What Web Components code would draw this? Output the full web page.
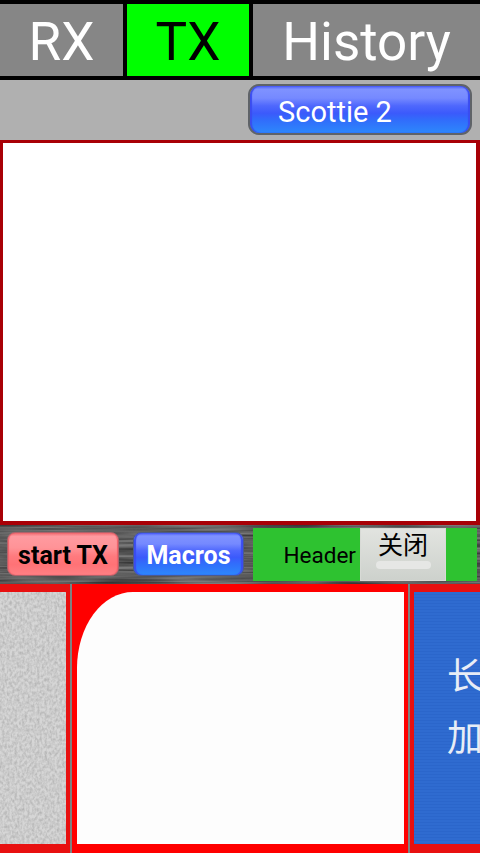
<!DOCTYPE html>
<html lang="zh">
<head>
<meta charset="utf-8">
<title>SSTV</title>
<style>
  html, body { margin: 0; padding: 0; background: #777; }
  body { width: 480px; height: 853px; overflow: hidden; font-family: Roboto, "Noto Sans CJK SC", sans-serif; }
</style>
</head>
<body>
<tab-bar>
  <tab-item>RX</tab-item>
  <tab-item active>TX</tab-item>
  <tab-item>History</tab-item>
</tab-bar>
<mode-bar><gloss-button color="blue" class="mode">Scottie 2</gloss-button></mode-bar>
<image-preview></image-preview>
<tool-bar>
  <gloss-button color="red" bold>start TX</gloss-button>
  <gloss-button color="blue" bold>Macros</gloss-button>
  <header-toggle>Header</header-toggle>
</tool-bar>
<template-strip>
  <strip-card kind="linen"></strip-card>
  <strip-card kind="image"></strip-card>
  <strip-card kind="note">长<br>加</strip-card>
</template-strip>

<script>
const noise = (fx, fy, slope, base) => "url(\"data:image/svg+xml," + encodeURIComponent(
  `<svg xmlns='http://www.w3.org/2000/svg' width='480' height='300'><filter id='n'><feTurbulence type='fractalNoise' baseFrequency='${fx} ${fy}' numOctaves='2' seed='4'/><feColorMatrix values='0 0 0 0 0 0 0 0 0 0 0 0 0 0 0 ${slope} 0 0 0 ${base}'/></filter><rect width='480' height='300' filter='url(#n)'/></svg>`
) + "\")";

class TabBar extends HTMLElement {
  connectedCallback() {
    this.attachShadow({ mode: 'open' }).innerHTML = `
    <style>
      :host {
        display: grid;
        grid-template-columns: 123px 122px 227px;
        grid-column-gap: 4px;
        height: 72px;
        padding: 4px 0;
        background: #000;
      }
    </style>
    <slot></slot>`;
  }
}

class TabItem extends HTMLElement {
  connectedCallback() {
    this.attachShadow({ mode: 'open' }).innerHTML = `
    <style>
      :host {
        display: flex;
        align-items: center;
        justify-content: center;
        box-sizing: border-box;
        padding-top: 5px;
        background: #868686;
        color: #fff;
        font: 53px/67px Roboto, sans-serif;
      }
      :host([active]) { background: #00ff00; color: #000; }
    </style>
    <slot></slot>`;
  }
}

class ModeBar extends HTMLElement {
  connectedCallback() {
    this.attachShadow({ mode: 'open' }).innerHTML = `
    <style>
      :host {
        display: flex;
        justify-content: flex-end;
        box-sizing: border-box;
        height: 60px;
        padding: 4px 8px 5px 0;
        background: #b0b0b0;
      }
      ::slotted(gloss-button) { width: 224px; }
    </style>
    <slot></slot>`;
  }
}

class GlossButton extends HTMLElement {
  connectedCallback() {
    const bold = this.hasAttribute('bold');
    this.attachShadow({ mode: 'open' }).innerHTML = `
    <style>
      :host {
        display: flex;
        box-sizing: border-box;
        border-radius: 11px;
        border: 2px solid #5f6368;
        color: #fff;
        font: 29px Roboto, sans-serif;
        align-items: center;
        justify-content: ${bold ? 'center' : 'flex-start'};
        padding: ${bold ? '3px 0 0' : '5px 0 0 28px'};
        font-weight: ${bold ? 700 : 400};
        background: linear-gradient(#4a5cf8 0, #7f92ff 7%, #7589ff 26%, #4f68fd 42%, #3b5afb 58%, #316cfb 72%, #2d88fb 100%);
        box-shadow: inset 2px 0 1px #3a4cf0, inset -2px 0 1px #3a4cf0;
      }
      :host([bold]) { font-size: 25px; border: 1px solid #4a5a90; border-radius: 8px; }
      :host([color=red]) {
        color: #000;
        border-color: #b0626a;
        background: linear-gradient(#f06a70 0, #ff9aa0 8%, #ff9397 35%, #ff7a7e 55%, #ff7276 75%, #ff8084 100%);
        box-shadow: inset 1px 0 1px #f06068, inset -1px 0 1px #f06068;
      }
    </style>
    <slot></slot>`;
  }
}

class ImagePreview extends HTMLElement {
  connectedCallback() {
    this.attachShadow({ mode: 'open' }).innerHTML = `
    <style>
      :host {
        display: block;
        box-sizing: border-box;
        height: 385px;
        border-style: solid;
        border-color: #a80006;
        border-width: 3px 4px 4px 3px;
        background: #fff;
      }
    </style>`;
  }
}

class ToolBar extends HTMLElement {
  connectedCallback() {
    this.attachShadow({ mode: 'open' }).innerHTML = `
    <style>
      :host {
        display: grid;
        grid-template-columns: 112px 111px 224px;
        grid-column-gap: 14px;
        align-items: start;
        box-sizing: border-box;
        height: 59px;
        padding: 3px 3px 0 7px;
        background: ${noise(0.012, 0.4, 1, -0.25)}, #7a7a7a;
      }
      ::slotted(gloss-button) { height: 44px; margin-top: 4px; }
      ::slotted(header-toggle) { margin: 0 5px 0 -5px; }
    </style>
    <slot></slot>`;
  }
}

class HeaderToggle extends HTMLElement {
  connectedCallback() {
    this.attachShadow({ mode: 'open' }).innerHTML = `
    <style>
      :host {
        display: flex;
        justify-content: flex-end;
        align-items: center;
        height: 53px;
        padding-right: 31px;
        background: #2ec230;
        color: #000;
        font: 22.5px Roboto, sans-serif;
      }
      .switch {
        display: flex;
        flex-direction: column;
        align-items: center;
        box-sizing: border-box;
        width: 86px;
        height: 53px;
        margin-left: 4px;
        padding-top: 1px;
        background: linear-gradient(#e2e4e0, #cdd1cc);
        box-shadow: inset 0 0 0 1px #d8dad6;
        font: 25px/28px "Noto Sans CJK SC", sans-serif;
      }
      .thumb {
        width: 55px;
        height: 8px;
        margin-top: 4px;
        border-radius: 4px;
        background: #e6e7e5;
      }
    </style>
    <slot></slot>
    <div class="switch"><span>关闭</span><div class="thumb"></div></div>`;
  }
}

class TemplateStrip extends HTMLElement {
  connectedCallback() {
    this.attachShadow({ mode: 'open' }).innerHTML = `
    <style>
      :host {
        display: grid;
        grid-template-columns: 70px 336px 70px;
        grid-column-gap: 2px;
        height: 269px;
        background: #808080;
      }
    </style>
    <slot></slot>`;
  }
}

class StripCard extends HTMLElement {
  connectedCallback() {
    const kind = this.getAttribute('kind');
    this.attachShadow({ mode: 'open' }).innerHTML = `
    <style>
      :host {
        display: block;
        box-sizing: border-box;
        border-style: solid;
        border-color: #e81010;
        border-width: 8px 0 9px 0;
        overflow: hidden;
        background: #e81010;
      }
      :host([kind=linen]) { border-right-width: 4px; background: ${noise(0.4, 0.3, 0.3, -0.1)}, #d6d6d6; }
      :host([kind=image]) {
        border-color: #ff0000;
        border-width: 8px 4px 9px 5px;
        background: #ff0000;
      }
      :host([kind=note]) {
        border-left-width: 4px;
        background: repeating-linear-gradient(#2f6bd0 0 2px, #2b66cb 2px 3px);
      }
      .image { height: 100%; background: #fdfdfd; border-top-left-radius: 56px 76px; }
      .note {
        padding: 50px 0 0 33px;
        width: 80px;
        color: #e8edf6;
        font: 36px/62px "Noto Sans CJK SC", sans-serif;
      }
    </style>
    ${kind === 'image' ? '<div class="image"></div>' : '<div class="note"><slot></slot></div>'}`;
  }
}

customElements.define('tab-bar', TabBar);
customElements.define('tab-item', TabItem);
customElements.define('mode-bar', ModeBar);
customElements.define('gloss-button', GlossButton);
customElements.define('image-preview', ImagePreview);
customElements.define('tool-bar', ToolBar);
customElements.define('header-toggle', HeaderToggle);
customElements.define('template-strip', TemplateStrip);
customElements.define('strip-card', StripCard);
</script>
</body>
</html>
